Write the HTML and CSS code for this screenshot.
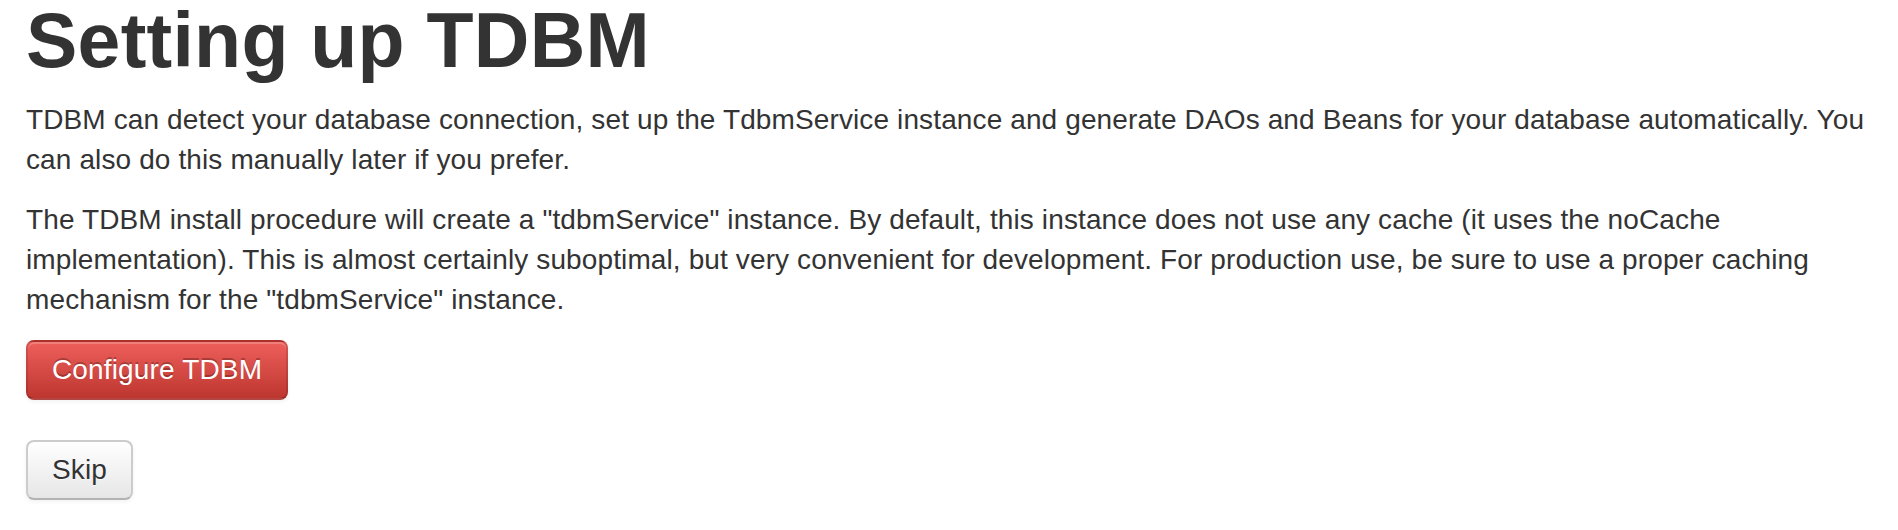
FILE: index.html
```html
<!DOCTYPE html>
<html lang="en">
<head>
<meta charset="utf-8">
<title>Setting up TDBM</title>
<link rel="stylesheet" href="styles.css">
</head>
<body>
<div class="container">
  <h1 class="title">Setting up TDBM</h1>
  <p class="text">TDBM can detect your database connection, set up the TdbmService instance and generate DAOs and Beans for your database automatically. You can also do this manually later if you prefer.</p>
  <p class="text">The TDBM install procedure will create a "tdbmService" instance. By default, this instance does not use any cache (it uses the noCache implementation). This is almost certainly suboptimal, but very convenient for development. For production use, be sure to use a proper caching mechanism for the "tdbmService" instance.</p>
  <form class="form" onsubmit="return false;">
    <button type="submit" class="btn btn-danger">Configure TDBM</button>
  </form>
  <form class="form" onsubmit="return false;">
    <button type="submit" class="btn">Skip</button>
  </form>
</div>
</body>
</html>
```

FILE: styles.css
```css
html, body {
  margin: 0;
  padding: 0;
  background: #ffffff;
}

body {
  font-family: "Liberation Sans", Arial, Helvetica, sans-serif;
  font-size: 28px;
  line-height: 40px;
  color: #333333;
}

.container {
  padding: 0 26px;
}

.title {
  margin: 0 0 20px 0;
  font-size: 77px;
  line-height: 80px;
  font-weight: bold;
  letter-spacing: 0.25px;
  color: #333333;
}

.text {
  margin: 0 0 20px 0;
  letter-spacing: 0.12px;
}

.form {
  margin: 0 0 40px 0;
}

.btn {
  display: inline-block;
  box-sizing: border-box;
  height: 60px;
  padding: 8px 24px;
  font-family: "Liberation Sans", Arial, Helvetica, sans-serif;
  font-size: 28px;
  line-height: 40px;
  letter-spacing: 0.15px;
  color: #333333;
  text-align: center;
  text-shadow: 0 1px 1px rgba(255, 255, 255, 0.75);
  background-color: #f5f5f5;
  background-image: linear-gradient(to bottom, #ffffff, #e6e6e6);
  border: 2px solid #cccccc;
  border-bottom-color: #b3b3b3;
  border-radius: 8px;
  box-shadow: inset 0 2px 0 rgba(255, 255, 255, 0.2), 0 2px 4px rgba(0, 0, 0, 0.05);
  cursor: pointer;
}

.btn-danger {
  color: #ffffff;
  text-shadow: 0 -2px 0 rgba(0, 0, 0, 0.25);
  background-color: #da4f49;
  background-image: linear-gradient(to bottom, #ee5f5b, #bd362f);
  border-color: rgba(0, 0, 0, 0.1) rgba(0, 0, 0, 0.1) rgba(0, 0, 0, 0.25);
}
```
